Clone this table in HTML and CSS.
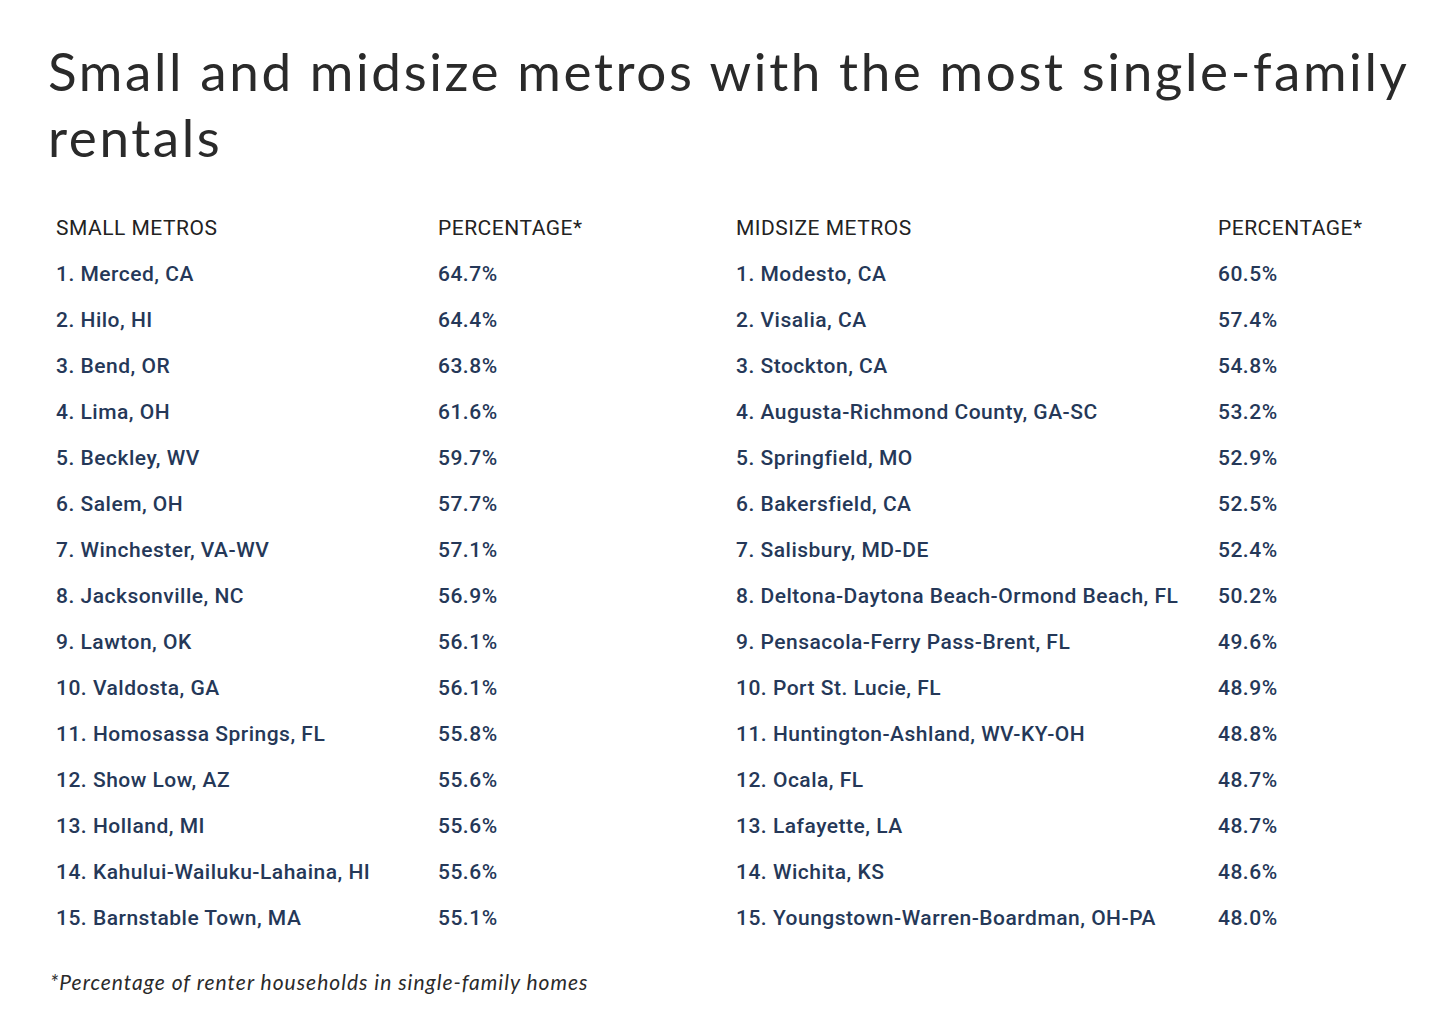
FILE: index.html
```html
<!DOCTYPE html>
<html>
<head>
<meta charset="utf-8">
<link rel="stylesheet" href="styles.css">
</head>
<body>
<div class="page">
  <h1 class="title">Small and midsize metros with the most single-family rentals</h1>
  <div class="tables">
    <div class="tbl tbl-small">
      <div class="th">SMALL METROS</div><div class="th">PERCENTAGE*</div>
      <div class="td">1. Merced, CA</div><div class="td">64.7%</div>
      <div class="td">2. Hilo, HI</div><div class="td">64.4%</div>
      <div class="td">3. Bend, OR</div><div class="td">63.8%</div>
      <div class="td">4. Lima, OH</div><div class="td">61.6%</div>
      <div class="td">5. Beckley, WV</div><div class="td">59.7%</div>
      <div class="td">6. Salem, OH</div><div class="td">57.7%</div>
      <div class="td">7. Winchester, VA-WV</div><div class="td">57.1%</div>
      <div class="td">8. Jacksonville, NC</div><div class="td">56.9%</div>
      <div class="td">9. Lawton, OK</div><div class="td">56.1%</div>
      <div class="td">10. Valdosta, GA</div><div class="td">56.1%</div>
      <div class="td">11. Homosassa Springs, FL</div><div class="td">55.8%</div>
      <div class="td">12. Show Low, AZ</div><div class="td">55.6%</div>
      <div class="td">13. Holland, MI</div><div class="td">55.6%</div>
      <div class="td">14. Kahului-Wailuku-Lahaina, HI</div><div class="td">55.6%</div>
      <div class="td">15. Barnstable Town, MA</div><div class="td">55.1%</div>
    </div>
    <div class="tbl tbl-mid">
      <div class="th">MIDSIZE METROS</div><div class="th">PERCENTAGE*</div>
      <div class="td">1. Modesto, CA</div><div class="td">60.5%</div>
      <div class="td">2. Visalia, CA</div><div class="td">57.4%</div>
      <div class="td">3. Stockton, CA</div><div class="td">54.8%</div>
      <div class="td">4. Augusta-Richmond County, GA-SC</div><div class="td">53.2%</div>
      <div class="td">5. Springfield, MO</div><div class="td">52.9%</div>
      <div class="td">6. Bakersfield, CA</div><div class="td">52.5%</div>
      <div class="td">7. Salisbury, MD-DE</div><div class="td">52.4%</div>
      <div class="td">8. Deltona-Daytona Beach-Ormond Beach, FL</div><div class="td">50.2%</div>
      <div class="td">9. Pensacola-Ferry Pass-Brent, FL</div><div class="td">49.6%</div>
      <div class="td">10. Port St. Lucie, FL</div><div class="td">48.9%</div>
      <div class="td">11. Huntington-Ashland, WV-KY-OH</div><div class="td">48.8%</div>
      <div class="td">12. Ocala, FL</div><div class="td">48.7%</div>
      <div class="td">13. Lafayette, LA</div><div class="td">48.7%</div>
      <div class="td">14. Wichita, KS</div><div class="td">48.6%</div>
      <div class="td">15. Youngstown-Warren-Boardman, OH-PA</div><div class="td">48.0%</div>
    </div>
  </div>
  <p class="note">*Percentage of renter households in single-family homes</p>
</div>
</body>
</html>
```
FILE: styles.css
```css
html, body {
  margin: 0;
  padding: 0;
  background: #ffffff;
}
.page {
  padding: 38px 20px 0 48px;
}
.title {
  margin: 0;
  font-family: "Lato", "Noto Sans", sans-serif;
  font-weight: 400;
  font-size: 53px;
  line-height: 66px;
  color: #2a2a2a;
  letter-spacing: 2.6px;
}
.tables {
  display: flex;
  margin-top: 35px;
}
.tbl {
  display: grid;
  font-family: "Roboto", sans-serif;
  font-weight: 500;
  font-size: 21px;
  line-height: 30px;
  letter-spacing: 0.5px;
}
.tbl-small {
  grid-template-columns: 382px 298px;
}
.tbl-mid {
  grid-template-columns: 482px auto;
}
.th, .td {
  padding: 8px 8px;
  white-space: nowrap;
}
.th {
  color: #222222;
  font-weight: 400;
}
.td {
  color: #253858;
}
.note {
  margin: 28px 0 0 2px;
  font-family: "Lato", "Noto Sans", sans-serif;
  font-style: italic;
  font-size: 21px;
  letter-spacing: 1px;
  color: #2a2a2a;
}
```
